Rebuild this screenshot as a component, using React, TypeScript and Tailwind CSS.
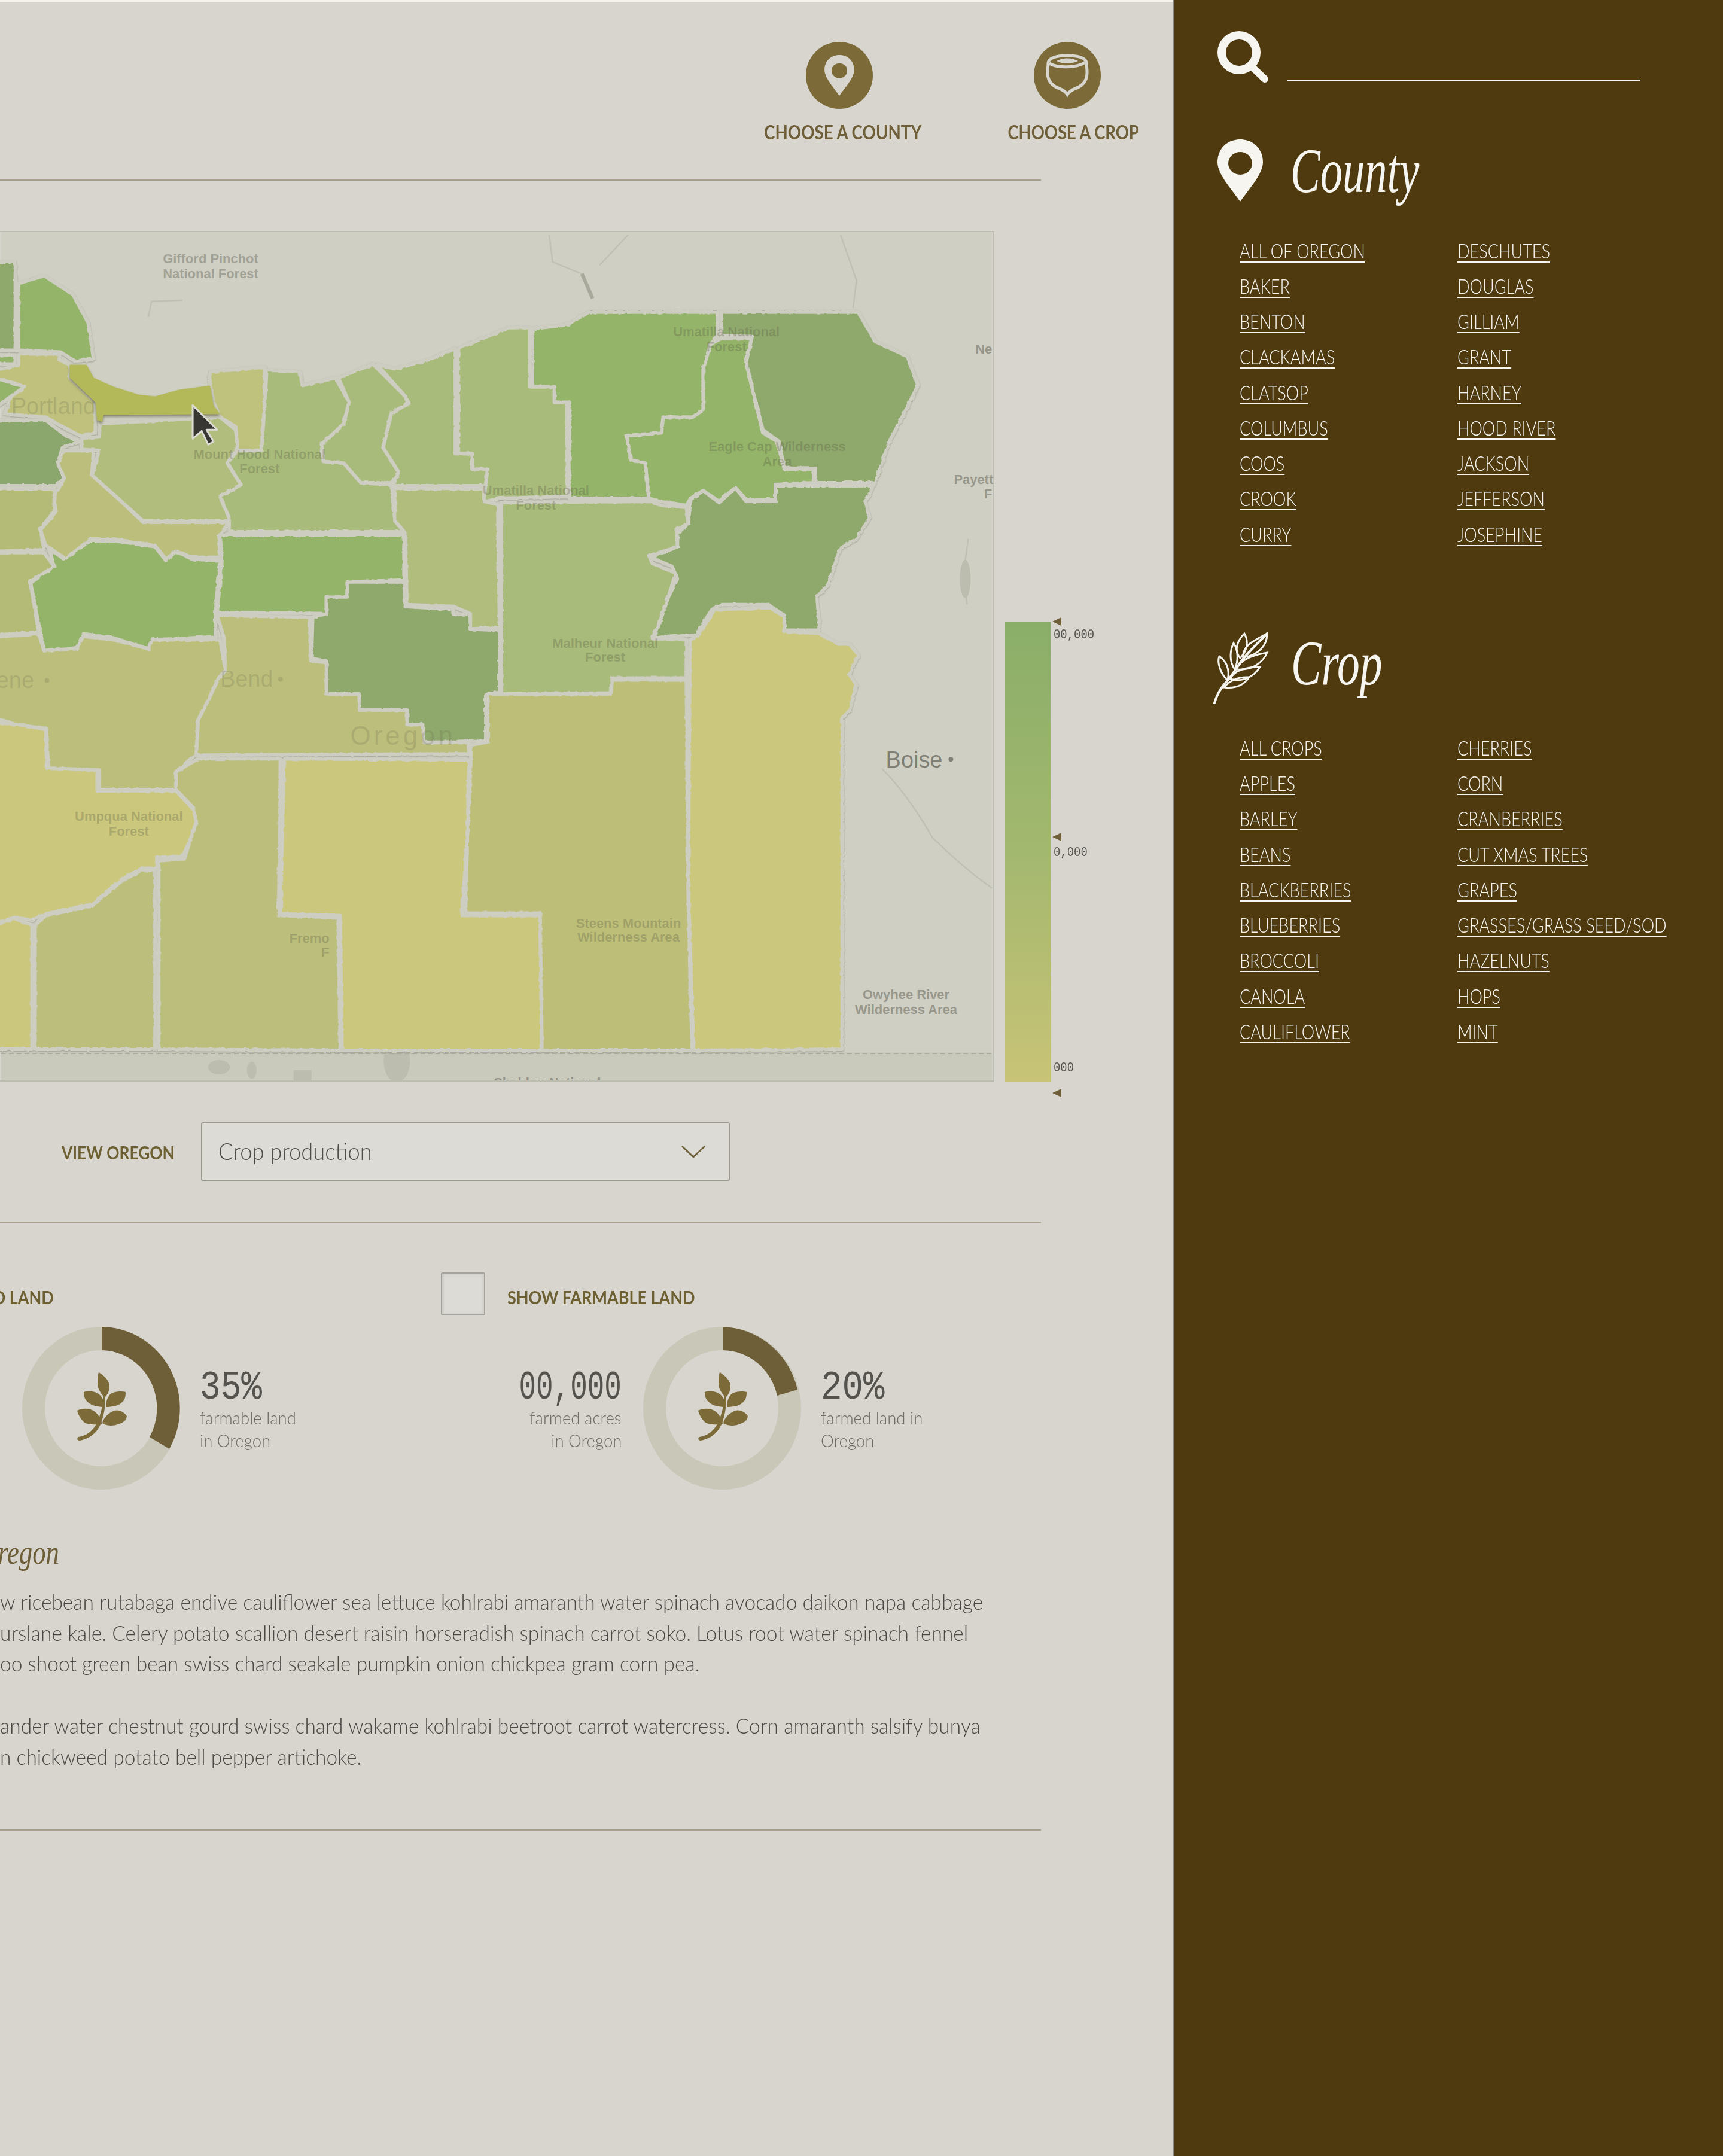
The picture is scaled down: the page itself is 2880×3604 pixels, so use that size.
const countyList = [
  ["ALL OF OREGON", "DESCHUTES"],
  ["BAKER", "DOUGLAS"],
  ["BENTON", "GILLIAM"],
  ["CLACKAMAS", "GRANT"],
  ["CLATSOP", "HARNEY"],
  ["COLUMBUS", "HOOD RIVER"],
  ["COOS", "JACKSON"],
  ["CROOK", "JEFFERSON"],
  ["CURRY", "JOSEPHINE"],
];

const cropList = [
  ["ALL CROPS", "CHERRIES"],
  ["APPLES", "CORN"],
  ["BARLEY", "CRANBERRIES"],
  ["BEANS", "CUT XMAS TREES"],
  ["BLACKBERRIES", "GRAPES"],
  ["BLUEBERRIES", "GRASSES/GRASS SEED/SOD"],
  ["BROCCOLI", "HAZELNUTS"],
  ["CANOLA", "HOPS"],
  ["CAULIFLOWER", "MINT"],
];

const bright = "#94b469";
const dark = "#8fa96c";
const mid = "#a8bb7a";
const olive = "#bcbf7b";
const yellow = "#cbc87d";

// county outlines, in page pixels (map box starts at y=386)
const counties: { c: string; p: string }[] = [
  { c: dark, p: "-10,436 24,436 24,584 -10,584" },
  { c: bright, p: "29,472 72,459 120,490 146,538 155,599 123,602 100,587 29,584" },
  { c: bright, p: "-10,592 23,592 23,607 -10,607" },
  { c: bright, p: "-10,630 23,640 40,645 17,661 -10,681" },
  { c: "#bfc17d", p: "-10,617 29,609 29,590 98,590 98,600 115,608 115,630 158,671 158,722 132,727 103,712 75,696 6,691 17,661 40,645 23,640 -10,630" },
  { c: "#bfc27d", p: "350,620 442,612 442,671 436,752 396,752 393,712 367,696 356,671 350,643" },
  { c: "#b0bd7b", p: "166,707 367,696 393,717 396,747 379,773 402,809 367,829 385,865 382,870 238,870 198,834 152,793 164,752 135,750 135,732 164,729" },
  { c: "#8ba76d", p: "-10,701 75,701 109,727 132,737 103,747 95,773 106,798 92,811 -10,811" },
  { c: olive, p: "106,752 155,752 152,793 198,834 238,872 382,872 365,895 367,931 321,931 293,921 276,934 258,911 189,900 149,900 109,934 75,911 66,885 92,854 89,829 106,798 95,773" },
  { c: "#b3bb77", p: "-10,816 89,816 89,854 66,883 72,918 -10,921" },
  { c: "#b3bb77", p: "-10,923 72,923 89,946 49,972 63,1056 -10,1061" },
  { c: bright, p: "80,916 106,934 149,903 189,903 258,913 276,936 293,921 321,934 367,936 359,1023 359,1064 253,1069 247,1084 189,1066 138,1059 126,1084 72,1087 49,972 89,946" },
  { c: bright, p: "376,893 675,893 675,969 580,972 580,997 545,997 545,1025 362,1023 370,936 367,895" },
  { c: mid, p: "445,617 500,620 505,643 560,630 583,671 574,707 537,742 540,770 574,773 603,806 649,809 654,811 660,870 680,888 382,888 382,865 367,829 402,809 379,773 396,752 436,752 442,671" },
  { c: mid, p: "565,630 623,607 677,661 683,673 654,689 640,747 666,788 654,806 603,806 574,773 540,770 537,742 574,707 583,671" },
  { c: mid, p: "629,607 660,615 718,599 761,581 761,757 789,757 789,783 815,783 815,811 657,811 666,788 640,747 654,689 683,673 677,661" },
  { c: mid, p: "766,581 850,546 886,546 886,645 927,645 927,671 948,671 948,829 835,832 808,838 815,783 789,783 789,757 766,757" },
  { c: "#b0bd7d", p: "660,816 809,816 809,837 832,842 835,1048 786,1051 786,1025 758,1013 680,1010 677,890 660,870" },
  { c: mid, p: "838,839 1088,837 1106,844 1148,847 1151,875 1130,885 1136,913 1085,928 1091,941 1130,957 1118,997 1106,1033 1091,1066 1148,1069 1148,1133 1024,1133 1021,1158 838,1160" },
  { c: dark, p: "522,1031 545,1025 545,997 580,997 580,972 675,972 677,1013 758,1018 758,1026 786,1026 786,1051 835,1053 835,1157 812,1160 812,1238 709,1241 706,1211 680,1211 680,1187 600,1187 600,1160 545,1160 545,1105 520,1100" },
  { c: olive, p: "362,1028 517,1031 519,1104 545,1107 545,1160 600,1160 600,1187 680,1187 680,1211 706,1211 709,1241 784,1241 784,1260 327,1262 330,1203 344,1176 365,1132 376,1120 373,1064" },
  { c: olive, p: "-10,1064 63,1059 72,1087 126,1084 138,1063 189,1069 247,1084 253,1069 367,1069 376,1120 365,1132 344,1176 330,1203 327,1260 293,1290 293,1320 164,1320 164,1287 80,1287 75,1217 34,1214 -10,1200" },
  { c: yellow, p: "-10,1208 29,1211 75,1219 77,1284 161,1287 161,1322 293,1322 324,1355 330,1374 304,1433 261,1433 261,1452 235,1452 201,1471 152,1512 75,1528 52,1539 23,1534 -10,1544" },
  { c: olive, p: "57,1547 75,1531 152,1515 201,1474 235,1455 258,1455 258,1755 57,1755" },
  { c: yellow, p: "-10,1547 23,1536 52,1547 52,1755 -10,1755" },
  { c: olive, p: "330,1268 468,1268 465,1531 565,1534 568,1757 264,1755 264,1439 307,1436 327,1374 322,1350 293,1320 293,1290" },
  { c: yellow, p: "474,1268 784,1270 781,1398 772,1531 903,1531 906,1757 571,1757 568,1531 468,1528" },
  { c: "#bdbf79", p: "815,1160 900,1160 1021,1160 1024,1136 1148,1136 1151,1485 1155,1670 1158,1757 906,1757 903,1527 778,1527 781,1403 787,1270 787,1245 815,1240" },
  { c: yellow, p: "1154,1070 1167,1061 1197,1018 1288,1015 1312,1030 1312,1055 1370,1058 1403,1076 1421,1076 1436,1094 1421,1127 1433,1145 1421,1188 1409,1200 1409,1755 1160,1757 1151,1485" },
  { c: dark, p: "1155,834 1176,819 1203,839 1230,814 1248,837 1297,837 1297,811 1461,811 1448,839 1455,865 1433,900 1406,916 1385,977 1367,997 1370,1038 1370,1053 1312,1053 1312,1028 1285,1010 1206,1010 1191,1018 1164,1061 1094,1066 1109,1023 1118,997 1133,967 1124,946 1088,931 1133,913 1133,890 1151,875" },
  { c: bright, p: "1206,564 1258,564 1248,604 1264,671 1276,722 1300,737 1312,783 1361,783 1361,806 1297,809 1297,834 1248,834 1230,814 1203,837 1176,819 1155,832 1148,844 1106,837 1085,832 1079,773 1055,768 1048,727 1106,722 1109,696 1158,696 1176,684 1176,615 1188,574" },
  { c: bright, p: "890,548 948,541 985,520 1200,520 1200,561 1188,574 1176,615 1176,684 1158,696 1109,696 1106,722 1048,727 1055,768 1079,773 1085,832 952,832 952,671 927,671 927,645 890,645" },
  { c: dark, p: "1206,520 1436,520 1464,569 1518,594 1536,643 1512,691 1488,737 1464,806 1364,806 1364,781 1312,781 1303,737 1276,717 1264,671 1248,604 1258,561 1206,559" },
];

const rivers = [
  "M918 390 L924 436 L973 456 L991 497",
  "M1051 390 L1003 441",
  "M1406 390 L1433 467 L1427 513",
  "M247 528 L252 502 L304 500",
  "M1476 1285 Q1520 1330 1560 1400 Q1610 1450 1660 1485",
  "M1620 900 L1612 960 L1618 1010",
];

function Pin({ className, hole }: { className: string; hole: string }) {
  return (
    <svg viewBox="0 0 76 104" className={className}>
      <path d="M38 0C60 0 76 16 76 38C76 58 52 84 38 104C24 84 0 58 0 38C0 16 16 0 38 0Z" fill="currentColor" />
      <ellipse cx="38" cy="40" rx="20" ry="19" fill={hole} />
    </svg>
  );
}

function Sprig() {
  return (
    <svg viewBox="0 0 85 115" className="w-[85px] h-[115px]" fill="#7c6b38">
      <path d="M38 0C48 6 56 14 56 24C56 32 52 38 48 42C42 36 36 28 36 18C36 10 36 6 38 0Z" />
      <path d="M13 33C22 30 34 32 40 38C46 44 47 50 47 58C38 58 26 56 20 50C15 46 13 40 13 33Z" />
      <path d="M83 33C76 31 64 32 58 36C52 42 50 50 50 58C60 58 72 56 77 50C82 46 83 40 83 33Z" />
      <path d="M2 64C12 59 24 60 32 66C38 72 42 78 43 86C34 88 22 88 14 84C8 78 4 72 2 64Z" />
      <path d="M85 73C80 66 72 62 64 64C54 68 46 76 44 85C52 90 64 90 72 86C80 84 84 80 85 73Z" />
      <path d="M48 38C50 52 48 66 43 82C38 96 28 110 6 114C2 114 1 110 4 108C20 106 32 94 38 78C43 62 46 52 46 38Z" />
    </svg>
  );
}

function Donut({ outer, inner }: { outer: string; inner: string }) {
  return (
    <div className="relative w-[264px] h-[272px] shrink-0 flex items-center justify-center">
      <svg viewBox="0 0 264 272" className="absolute inset-0 w-full h-full">
        <path
          fillRule="evenodd"
          fill="#c9c7b8"
          d="M132 0A132 136 0 1 1 132 272A132 136 0 1 1 132 0ZM132 39A94 97 0 1 0 132 233A94 97 0 1 0 132 39Z"
        />
        <path
          fill="#6f5f38"
          d={`M133 0A132 136 0 0 1 ${outer}L${inner}A94 97 0 0 0 133 39Z`}
        />
      </svg>
      <div className="relative -mt-[6px]">
        <Sprig />
      </div>
    </div>
  );
}

function Stat({ num, scale, lines, right }: { num: string; scale: string; lines: string[]; right?: boolean }) {
  return (
    <div className={`flex flex-col pt-[72px] ${right ? "items-end" : "items-start"}`}>
      <div className={`font-['Liberation_Mono',monospace] text-[68px] leading-[60px] text-[#55534e] whitespace-nowrap ${scale}`}>{num}</div>
      {lines.map((l) => (
        <div
          key={l}
          className={`font-['Lato',sans-serif] font-light text-[30px] leading-[38px] text-[#6f6d66] whitespace-nowrap scale-x-[0.92] ${right ? "origin-right" : "origin-left"}`}
        >
          {l}
        </div>
      ))}
    </div>
  );
}

function LinkGrid({ rows }: { rows: string[][] }) {
  return (
    <div className="pl-[37px]">
      {rows.map((r) => (
        <div key={r[0]} className="flex h-[59.25px] items-center">
          {r.map((name, i) => (
            <div key={name} className={i === 0 ? "w-[364px]" : ""}>
              <a className="block origin-left scale-x-[0.82] font-['Lato',sans-serif] font-light text-[33px] leading-[36px] text-[#f6f5f0] underline decoration-2 underline-offset-[5px] whitespace-nowrap">
                {name}
              </a>
            </div>
          ))}
        </div>
      ))}
    </div>
  );
}

function Divider() {
  return <div className="w-[1740px] h-[2px] bg-[#a69f8b]" />;
}

function OregonMap() {
  const label = "font-['Liberation_Sans',sans-serif] font-bold";
  const plain = "font-['Liberation_Sans',sans-serif]";
  return (
    <svg viewBox="0 386 1660 1421" className="block w-full h-full">
      <defs>
        <filter id="rough" x="-2%" y="-2%" width="104%" height="104%" colorInterpolationFilters="sRGB">
          <feTurbulence type="fractalNoise" baseFrequency="0.12" numOctaves="2" seed="4" />
          <feDisplacementMap in="SourceGraphic" scale="4" />
        </filter>
        <filter id="edge" x="-2%" y="-2%" width="104%" height="104%">
          <feDropShadow dx="0" dy="1" stdDeviation="1.2" floodColor="#8e8e80" floodOpacity="0.8" />
        </filter>
        <filter id="lift" x="-10%" y="-10%" width="120%" height="130%">
          <feDropShadow dx="0" dy="3" stdDeviation="2" floodColor="#5b5a3c" floodOpacity="0.7" />
        </filter>
      </defs>
      <rect x="0" y="386" width="1660" height="1422" fill="#cfcfc3" />
      <rect x="0" y="1760" width="1660" height="50" fill="#c9c9bc" />
      <g fill="none" stroke="#c0c0b3" strokeWidth="2.5">
        {rivers.map((d) => (
          <path key={d} d={d} />
        ))}
      </g>
      <path d="M973 456 L991 497" fill="none" stroke="#a8a89b" strokeWidth="6" />
      <g fill="#bcbcaf">
        <ellipse cx="1615" cy="967" rx="9" ry="32" />
        <ellipse cx="663" cy="1775" rx="22" ry="35" />
        <ellipse cx="420" cy="1790" rx="8" ry="14" />
        <rect x="490" y="1790" width="30" height="22" />
        <ellipse cx="365" cy="1785" rx="18" ry="12" />
      </g>
      <path d="M0 1762H1660" stroke="#a9a99b" strokeWidth="2" strokeDasharray="8 5" />
      <path d="M1411 1200V1755" stroke="#a9a99b" strokeWidth="2" strokeDasharray="8 5" />
      <path d="M985 518H1436" stroke="#a9a99b" strokeWidth="2" strokeDasharray="8 5" />
      <g filter="url(#edge)">
        <g filter="url(#rough)">
          {counties.map((k) => (
            <polygon key={k.p} points={k.p} fill={k.c} stroke="#cdcdc1" strokeWidth="6" strokeLinejoin="round" />
          ))}
        </g>
      </g>
      <g className={label} fontSize="22" fill="#55553f" fillOpacity="0.3" textAnchor="middle">
        <text x="351" y="438" fillOpacity="0.45" fill="#66665c">Gifford Pinchot</text>
        <text x="351" y="463" fillOpacity="0.45" fill="#66665c">National Forest</text>
        <text x="433" y="766">Mount Hood National</text>
        <text x="433" y="790">Forest</text>
        <text x="1215" y="560">Umatilla National</text>
        <text x="1215" y="585">Forest</text>
        <text x="1300" y="753">Eagle Cap Wilderness</text>
        <text x="1300" y="778">Area</text>
        <text x="896" y="826">Umatilla National</text>
        <text x="896" y="851">Forest</text>
        <text x="1012" y="1082">Malheur National</text>
        <text x="1012" y="1106">Forest</text>
        <text x="214" y="1372">Umpqua National</text>
        <text x="214" y="1397">Forest</text>
        <text x="550" y="1577" textAnchor="end">Fremo</text>
        <text x="550" y="1600" textAnchor="end">F</text>
        <text x="1051" y="1551">Steens Mountain</text>
        <text x="1051" y="1575">Wilderness Area</text>
        <text x="1516" y="1671" fill="#66665c" fillOpacity="0.55">Owyhee River</text>
        <text x="1516" y="1696" fill="#66665c" fillOpacity="0.55">Wilderness Area</text>
        <text x="1660" y="589" textAnchor="end" fill="#66665c" fillOpacity="0.55">Ne</text>
        <text x="1662" y="808" textAnchor="end" fill="#66665c" fillOpacity="0.55">Payett</text>
        <text x="1660" y="832" textAnchor="end" fill="#66665c" fillOpacity="0.55">F</text>
        <text x="915" y="1818" fill="#66665c" fillOpacity="0.55">Sheldon National</text>
      </g>
      <g className={plain} fontSize="38" fill="#66664a" fillOpacity="0.22">
        <text x="17" y="691">Portland</text>
        <text x="367" y="1148">Bend</text>
        <text x="-8" y="1150">ene</text>
        <text x="585" y="1245" fontSize="44" letterSpacing="5">Oregon</text>
        <text x="1482" y="1283" fill="#66665c" fillOpacity="0.75">Boise</text>
        <circle cx="468" cy="1135" r="4" />
        <circle cx="77" cy="1137" r="4" />
        <circle cx="1591" cy="1269" r="4" fill="#66665c" fillOpacity="0.75" />
      </g>
      <polygon
        points="115,608 143,608 155,630 189,645 230,658 258,661 298,650 350,643 356,676 367,691 172,692 169,704 161,701 158,671 115,630"
        fill="#b3b958"
        filter="url(#lift)"
      />
      <polygon points="321,676 321,732 336,719 347,742 356,737 344,717 362,717" fill="#383632" stroke="#dcdcd4" strokeWidth="3" strokeLinejoin="round" />
    </svg>
  );
}

export default function App() {
  return (
    <div className="flex w-[2880px] min-h-[3604px] bg-[#d7d5ce] overflow-hidden">
      <main className="w-[1960px] shrink-0 overflow-hidden">
        <div className="h-[4px] bg-[#f6f5f0]" />

        {/* header nav */}
        <div className="h-[296px] flex justify-end gap-[96px] pt-[66px] pr-[34px]">
          <div className="flex flex-col items-center">
            <div className="w-[112px] h-[112px] -ml-[13px] rounded-full bg-[#7c6b38] flex items-center justify-center text-[#d7d5ce]">
              <Pin className="w-[50px] h-[68px]" hole="#7c6b38" />
            </div>
            <div className="mt-[18px] font-['Lato',sans-serif] font-bold text-[33px] leading-[40px] text-[#6f5f38] whitespace-nowrap scale-x-[0.84]">CHOOSE A COUNTY</div>
          </div>
          <div className="flex flex-col items-center">
            <div className="w-[112px] h-[112px] -ml-[19px] rounded-full bg-[#7c6b38]">
              <svg viewBox="0 0 112 112" className="w-full h-full" fill="none" stroke="#d7d5ce" strokeWidth="5">
                <path d="M24 38C22 26 40 23 56 23C72 23 90 26 88 38C90 52 90 64 80 72C72 79 62 78 56 88C50 78 40 79 32 72C22 64 22 52 24 38Z" />
                <path d="M26 36C40 44 72 44 86 34" />
                <path d="M38 32C48 26 64 26 74 32C64 37 48 37 38 32Z" fill="#d7d5ce" stroke="none" />
              </svg>
            </div>
            <div className="mt-[18px] font-['Lato',sans-serif] font-bold text-[33px] leading-[40px] text-[#6f5f38] whitespace-nowrap scale-x-[0.83]">CHOOSE A CROP</div>
          </div>
        </div>
        <Divider />

        {/* map + legend */}
        <div className="flex mt-[84px]">
          <div className="w-[1662px] h-[1422px] border-t-2 border-r-2 border-b-2 border-[#bcbcb0] shrink-0">
            <OregonMap />
          </div>
          <div className="relative ml-[18px] w-[76px] h-[768px] mt-[654px] bg-gradient-to-b from-[#8aae68] via-[#a3b86f] to-[#c8c376]">
            <span className="absolute left-[79px] -top-[8px] w-0 h-0 border-y-[7px] border-y-transparent border-r-[15px] border-r-[#6f5f38]" />
            <span className="absolute left-[79px] top-[352px] w-0 h-0 border-y-[7px] border-y-transparent border-r-[15px] border-r-[#6f5f38]" />
            <span className="absolute left-[79px] top-[780px] w-0 h-0 border-y-[7px] border-y-transparent border-r-[15px] border-r-[#6f5f38]" />
            <span className="absolute left-[81px] top-[10px] origin-left scale-x-[0.86] font-['Liberation_Mono',monospace] text-[22px] leading-[24px] text-[#55534e]">00,000</span>
            <span className="absolute left-[81px] top-[374px] origin-left scale-x-[0.86] font-['Liberation_Mono',monospace] text-[22px] leading-[24px] text-[#55534e]">0,000</span>
            <span className="absolute left-[81px] top-[734px] origin-left scale-x-[0.86] font-['Liberation_Mono',monospace] text-[22px] leading-[24px] text-[#55534e]">000</span>
          </div>
        </div>

        {/* view select */}
        <div className="flex items-center mt-[68px] pl-[103px]">
          <span className="w-[233px] mt-[2px] font-['Lato',sans-serif] font-bold text-[31px] text-[#6d6033] whitespace-nowrap origin-left scale-x-[0.85]">VIEW OREGON</span>
          <div className="w-[884px] h-[98px] bg-[#dcdbd6] border-2 border-[#99988f] rounded-[3px] flex items-center justify-between pl-[27px] pr-[39px]">
            <span className="-mt-[2px] font-['Lato',sans-serif] font-light text-[40px] text-[#4f4d48] whitespace-nowrap origin-left scale-x-[0.907]">Crop production</span>
            <svg viewBox="0 0 40 21" className="w-[40px] h-[21px]" fill="none" stroke="#6f5f38" strokeWidth="2.5">
              <path d="M1 1L20 19L39 1" />
            </svg>
          </div>
        </div>

        <div className="mt-[68px]">
          <Divider />
        </div>

        {/* stats */}
        <div className="flex pt-[83px]">
          <div className="w-[737px] shrink-0">
            <div className="h-[72px] flex items-center justify-end w-[90px] mt-[5px] -mb-[5px]">
              <span className="font-['Lato',sans-serif] font-bold text-[31px] text-[#6d6033] whitespace-nowrap origin-right scale-x-[0.87]">SHOW FARMED LAND</span>
            </div>
            <div className="flex mt-[19px] pl-[37px] gap-[33px]">
              <Donut outer="246 204" inner="213 184" />
              <Stat num="35%" scale="origin-left scale-x-[0.85]" lines={["farmable land", "in Oregon"]} />
            </div>
          </div>
          <div>
            <div className="flex items-center gap-[37px] h-[72px]">
              <div className="w-[74px] h-[72px] bg-[#dcdbd6] border-2 border-[#a5a49c] rounded-[3px] shadow-[inset_0_0_6px_rgba(0,0,0,0.12)]" />
              <span className="mt-[10px] font-['Lato',sans-serif] font-bold text-[31px] text-[#6d6033] whitespace-nowrap origin-left scale-x-[0.87]">SHOW FARMABLE LAND</span>
            </div>
            <div className="flex mt-[19px]">
              <div className="w-[302px] flex justify-end">
                <Stat right num="00,000" scale="origin-right scale-x-[0.7]" lines={["farmed acres", "in Oregon"]} />
              </div>
              <div className="ml-[36px] mr-[33px]">
                <Donut outer="258 105" inner="224 115" />
              </div>
              <Stat num="20%" scale="origin-left scale-x-[0.87]" lines={["farmed land in", "Oregon"]} />
            </div>
          </div>
        </div>

        {/* copy */}
        <div className="mt-[70px] w-[99px] flex justify-end">
          <span className="font-['Liberation_Serif',serif] italic text-[56px] leading-[70px] text-[#6f5f38] whitespace-nowrap origin-right scale-x-[0.8]">Oregon</span>
        </div>
        <div className="mt-[22px] font-['Lato',sans-serif] font-light text-[36px] leading-[51.7px] text-[#4b4945] whitespace-nowrap">
          <p className="origin-left scale-x-[0.932]">w ricebean rutabaga endive cauliflower sea lettuce kohlrabi amaranth water spinach avocado daikon napa cabbage</p>
          <p className="origin-left scale-x-[0.932]">urslane kale. Celery potato scallion desert raisin horseradish spinach carrot soko. Lotus root water spinach fennel</p>
          <p className="origin-left scale-x-[0.932]">oo shoot green bean swiss chard seakale pumpkin onion chickpea gram corn pea.</p>
          <p className="origin-left scale-x-[0.932] mt-[51.7px]">ander water chestnut gourd swiss chard wakame kohlrabi beetroot carrot watercress. Corn amaranth salsify bunya</p>
          <p className="origin-left scale-x-[0.932]">n chickweed potato bell pepper artichoke.</p>
        </div>
        <div className="mt-[96px]">
          <Divider />
        </div>
      </main>

      {/* sidebar */}
      <aside className="w-[920px] shrink-0 bg-[#4f3a0f] border-l-[3px] border-[#8d8c84] pl-[72px] text-[#f6f5f0]">
        <div className="flex items-end pt-[52px]">
          <svg viewBox="0 0 86 86" className="w-[86px] h-[86px]" fill="none" stroke="currentColor">
            <circle cx="36" cy="36" r="29" strokeWidth="14" />
            <path d="M56 58L79 80" strokeWidth="12" strokeLinecap="round" />
          </svg>
          <div className="ml-[31px] mb-[3px] w-[590px] h-[2px] bg-[#f6f5f0]" />
        </div>

        <div className="flex items-start mt-[95px]">
          <Pin className="w-[76px] h-[104px]" hole="#4f3a0f" />
          <h2 className="ml-[46px] -mt-[2px] font-['Liberation_Serif',serif] italic text-[105px] leading-[110px] origin-left scale-x-[0.71]">County</h2>
        </div>
        <div className="mt-[48px]">
          <LinkGrid rows={countyList} />
        </div>

        <div className="flex items-start mt-[135px] -ml-[9px]">
          <svg viewBox="0 0 95 120" className="w-[95px] h-[120px]" fill="none" stroke="currentColor" strokeWidth="3">
            <path d="M4 118C8 104 14 94 22 85C36 70 46 50 54 42C66 28 80 14 92 2" strokeWidth="4" strokeLinecap="round" />
            <path d="M52 42C50 22 70 14 92 2C92 22 78 38 52 42Z" />
            <path d="M47 43C36 30 42 14 54 2C62 16 58 32 47 43Z" />
            <path d="M41 62C46 46 68 38 92 34C84 52 66 64 41 62Z" />
            <path d="M38 62C28 48 30 30 36 18C44 30 44 48 38 62Z" />
            <path d="M30 78C36 66 52 58 80 58C70 74 52 84 30 78Z" />
            <path d="M26 80C14 70 8 50 12 40C24 48 30 62 26 80Z" />
            <path d="M20 92C30 80 45 74 62 75C52 90 36 94 20 92Z" />
          </svg>
          <h2 className="ml-[37px] -mt-[3px] font-['Liberation_Serif',serif] italic text-[105px] leading-[110px] origin-left scale-x-[0.72]">Crop</h2>
        </div>
        <div className="mt-[43px]">
          <LinkGrid rows={cropList} />
        </div>
      </aside>
    </div>
  );
}
